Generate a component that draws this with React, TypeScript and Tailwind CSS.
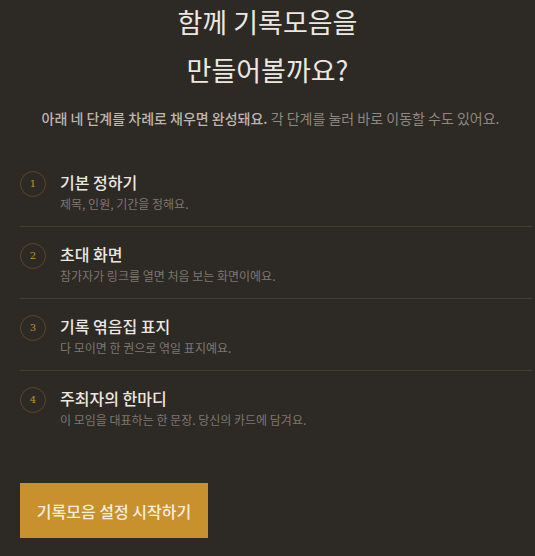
import React from 'react';

const steps = [
  { n: '1', title: '기본 정하기', desc: '제목, 인원, 기간을 정해요.' },
  { n: '2', title: '초대 화면', desc: '참가자가 링크를 열면 처음 보는 화면이에요.' },
  { n: '3', title: '기록 엮음집 표지', desc: '다 모이면 한 권으로 엮일 표지예요.' },
  { n: '4', title: '주최자의 한마디', desc: '이 모임을 대표하는 한 문장. 당신의 카드에 담겨요.' },
];

const sans = { fontFamily: '"Noto Sans CJK KR", "Noto Sans", sans-serif' };

export default function App() {
  return (
    <div className="min-h-[556px] w-[535px] overflow-hidden bg-[#2d2925]" style={sans}>
      <h1 className="-mt-[2px] text-center text-[27px] font-normal leading-[48px] text-[#ece8e1]">
        함께 기록모음을
        <br />
        만들어볼까요?
      </h1>
      <p className="mt-[14px] pl-[6px] text-center text-[14px] leading-[20px] text-[#8e8880]">
        <span className="font-medium text-[#bdb7ae]">아래 네 단계를 차례로 채우면 완성돼요.</span> 각 단계를 눌러 바로 이동할 수도 있어요.
      </p>

      <ul className="ml-[20px] mr-[3px] mt-[27px]">
        {steps.map((s, i) => (
          <li
            key={s.n}
            className={`flex h-[72px] items-start gap-[14px] ${i < steps.length - 1 ? 'border-b border-[#443c2d]' : ''}`}
          >
            <div className="mt-[16px] flex h-[26px] w-[26px] shrink-0 items-center justify-center rounded-full border border-[#5e4826]">
              <span
                className="text-[10px] leading-none text-[#c8912e]"
                style={{ fontFamily: '"DejaVu Serif", "Liberation Serif", serif' }}
              >
                {s.n}
              </span>
            </div>
            <div className="mt-[16px]">
              <div className="text-[16px] font-medium leading-[22px] text-[#ece8e1]">{s.title}</div>
              <div className="mt-[1px] text-[12px] leading-[20px] text-[#7d7770]">{s.desc}</div>
            </div>
          </li>
        ))}
      </ul>

      <button className="ml-[20px] mt-[40px] flex h-[55px] w-[188px] items-center justify-center bg-[#c8912e] text-[16px] font-medium text-[#f7eedb]">
        기록모음 설정 시작하기
      </button>
    </div>
  );
}
